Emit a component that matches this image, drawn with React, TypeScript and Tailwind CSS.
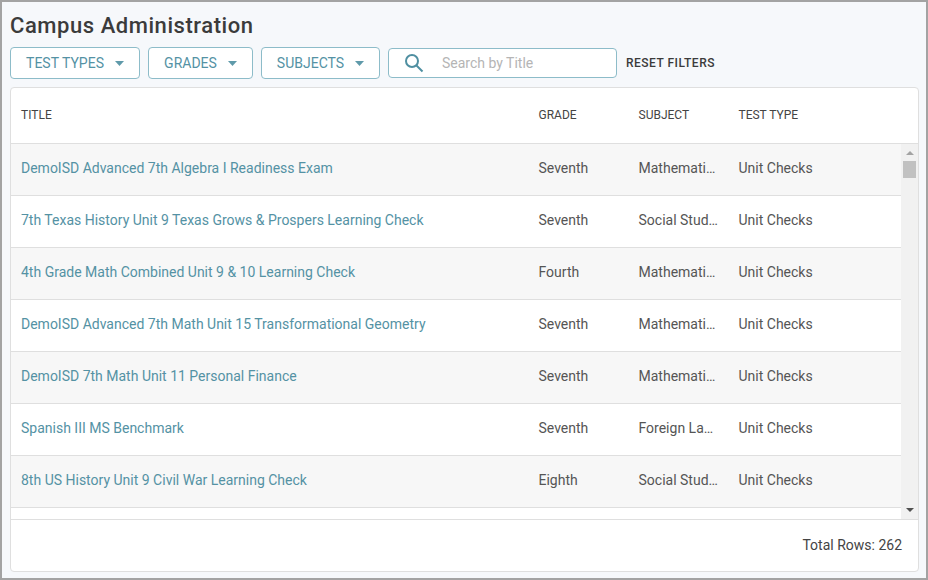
const rows = [
  ["DemoISD Advanced 7th Algebra I Readiness Exam", "Seventh", "Mathematics"],
  ["7th Texas History Unit 9 Texas Grows & Prospers Learning Check", "Seventh", "Social Studies"],
  ["4th Grade Math Combined Unit 9 & 10 Learning Check", "Fourth", "Mathematics"],
  ["DemoISD Advanced 7th Math Unit 15 Transformational Geometry", "Seventh", "Mathematics"],
  ["DemoISD 7th Math Unit 11 Personal Finance", "Seventh", "Mathematics"],
  ["Spanish III MS Benchmark", "Seventh", "Foreign Language"],
  ["8th US History Unit 9 Civil War Learning Check", "Eighth", "Social Studies"],
];

function Caret() {
  return (
    <svg width="9" height="5" viewBox="0 0 9 5" className="fill-[#5f9aaa]">
      <path d="M0 0h9L4.5 5z" />
    </svg>
  );
}

function FilterButton({ label, width }: { label: string; width: string }) {
  return (
    <button type="button" className={`flex h-[32px] items-center justify-center gap-[11px] rounded border border-[#8dbcc9] bg-white text-[14px] text-[#5492a4] ${width}`}>
      {label}
      <Caret />
    </button>
  );
}

export default function App() {
  return (
    <div className="flex h-[580px] w-[928px] flex-col border-2 border-[#a3a3a3] bg-[#f6f8fb] pt-0 pr-[7px] pb-1.5 pl-2 font-['Roboto',sans-serif]">
      <h1 className="mt-[9px] text-[22px] leading-[30px] font-medium tracking-[0.55px] text-[#3b3b3b]">Campus Administration</h1>

      <div className="mt-[6px] flex h-[32px] items-center gap-2">
        <FilterButton label="TEST TYPES" width="w-[130px]" />
        <FilterButton label="GRADES" width="w-[105px]" />
        <FilterButton label="SUBJECTS" width="w-[119px]" />
        <div className="flex h-[30px] w-[229px] items-center rounded border border-[#8dbcc9] bg-white pl-[15px]">
          <svg width="20" height="20" viewBox="0 0 20 20" fill="none" stroke="#4f8fa1" strokeWidth="2">
            <circle cx="8" cy="8" r="6" />
            <path d="M12.5 12.5 18.5 18.5" />
          </svg>
          <span className="ml-[18px] text-[14px] text-[#b5b5b5]">Search by Title</span>
        </div>
        <span className="ml-px text-[12px] font-medium tracking-[0.5px] text-[#3b3b3b]">RESET FILTERS</span>
      </div>

      <div className="mt-[8px] flex min-h-0 flex-1 flex-col overflow-hidden rounded border border-[#dfdfdf] bg-white">
        <div className="grid h-[56px] shrink-0 grid-cols-[517px_100px_100px_1fr] items-center border-b border-[#dfdfdf] pb-[2px] text-[12px] text-[#444]">
          <span className="pl-[10px]">TITLE</span>
          <span className="pl-[10.5px]">GRADE</span>
          <span className="pl-[10.5px]">SUBJECT</span>
          <span className="pl-[10.5px]">TEST TYPE</span>
        </div>

        <div className="flex h-[376px] shrink-0 border-b border-[#dfdfdf]">
          <div className="min-w-0 flex-1">
            {rows.map((r, i) => (
              <div
                key={r[0]}
                className={`grid h-[52px] grid-cols-[517px_100px_100px_1fr] items-center border-b border-[#dfdfdf] pb-[2px] text-[14px] text-[#555] ${i % 2 === 0 ? "bg-[#f7f7f7]" : "bg-white"}`}
              >
                <span className="pl-[10px] text-[#5492a4]">{r[0]}</span>
                <span className="pl-[10.5px]">{r[1]}</span>
                <span className="truncate pr-[8px] pl-[10.5px]">{r[2]}</span>
                <span className="pl-[10.5px]">Unit Checks</span>
              </div>
            ))}
          </div>
          <div className="flex w-[17px] shrink-0 flex-col items-center bg-[#f1f1f1]">
            <svg width="8" height="4" viewBox="0 0 8 4" className="mt-[7px] fill-[#a3a3a3]">
              <path d="M0 4h8L4 0z" />
            </svg>
            <div className="mt-[6px] h-[17px] w-[13px] bg-[#c1c1c1]" />
            <svg width="8" height="4" viewBox="0 0 8 4" className="mt-auto mb-[7px] fill-[#505050]">
              <path d="M0 0h8L4 4z" />
            </svg>
          </div>
        </div>

        <div className="flex flex-1 items-center justify-end pr-4 text-[14px] text-[#444]">Total Rows: 262</div>
      </div>
    </div>
  );
}
